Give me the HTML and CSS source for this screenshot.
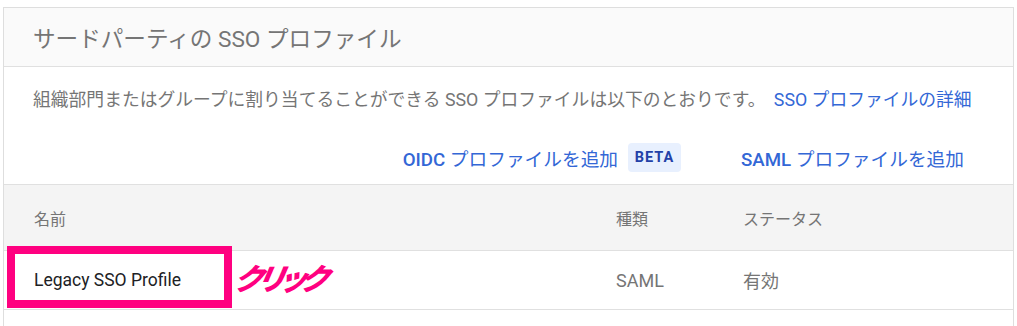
FILE: index.html
```html
<!DOCTYPE html>
<html lang="ja">
<head>
<meta charset="utf-8">
<link rel="stylesheet" href="styles.css">
</head>
<body>
<div class="card">
  <div class="card-header">サードパーティの SSO プロファイル</div>
  <p class="desc">組織部門またはグループに割り当てることができる SSO プロファイルは以下のとおりです。 <a class="link">SSO プロファイルの詳細</a></p>
  <div class="actions">
    <a class="action"><b>OIDC</b> プロファイルを追加</a>
    <span class="badge">BETA</span>
    <a class="action saml"><b>SAML</b> プロファイルを追加</a>
  </div>
  <div class="table">
    <div class="row head">
      <div>名前</div>
      <div>種類</div>
      <div>ステータス</div>
    </div>
    <div class="row body">
      <div class="name">Legacy SSO Profile</div>
      <div>SAML</div>
      <div>有効</div>
    </div>
    <div class="row body"></div>
  </div>
</div>
<div class="highlight"></div>
<div class="callout">クリック</div>
</body>
</html>
```
FILE: styles.css
```css
* { box-sizing: border-box; }
body {
  margin: 0;
  background: #fff;
  font-family: Roboto, "Noto Sans CJK JP", sans-serif;
}
.card {
  margin: 7px 0 0 3px;
  width: 1011px;
  border: 1px solid #dedede;
  background: #fff;
}
.card-header {
  height: 59px;
  background: #fafafa;
  border-bottom: 1px solid #e0e0e0;
  padding-left: 29px;
  display: flex;
  align-items: center;
  font-size: 22.6px;
  color: #757575;
}
.desc {
  margin: 21px 0 0;
  padding-left: 29px;
  font-size: 17.8px;
  line-height: 24px;
  color: #757575;
}
.link {
  color: #3367d6;
  margin-left: 4px;
}
.actions {
  margin-top: 31px;
  display: flex;
  justify-content: flex-end;
  align-items: center;
  padding-right: 49px;
  height: 29px;
}
.action {
  color: #3367d6;
  font-size: 18.7px;
}
.action b { font-weight: 500; }
.badge {
  margin-left: 10px;
  width: 53px;
  height: 29px;
  border-radius: 4px;
  background: #e8f0fe;
  color: #2341a8;
  font-size: 14.5px;
  font-weight: 700;
  letter-spacing: 1px;
  display: flex;
  align-items: center;
  justify-content: center;
}
.saml { margin-left: 60px; }
.table {
  margin-top: 12px;
  border-top: 1px solid #e0e0e0;
}
.row {
  display: grid;
  grid-template-columns: 582px 127px 1fr;
  padding-left: 30px;
  align-items: center;
  border-bottom: 1px solid #e0e0e0;
}
.row.head {
  height: 66px;
  background: #f4f4f4;
  font-size: 16px;
  color: #757575;
}
.row.body {
  height: 59px;
  font-size: 18px;
  color: #757575;
}
.name { color: #202124; font-size: 17.5px; }
.highlight {
  position: absolute;
  left: 7px;
  top: 246px;
  width: 225px;
  height: 62px;
  border: 8px solid #ff0080;
}
.callout {
  position: absolute;
  left: 234px;
  top: 260px;
  font-size: 30px;
  line-height: 40px;
  font-weight: 900;
  font-style: italic;
  letter-spacing: -8px;
  color: #ff0080;
  transform: skewX(-10deg);
}
```
